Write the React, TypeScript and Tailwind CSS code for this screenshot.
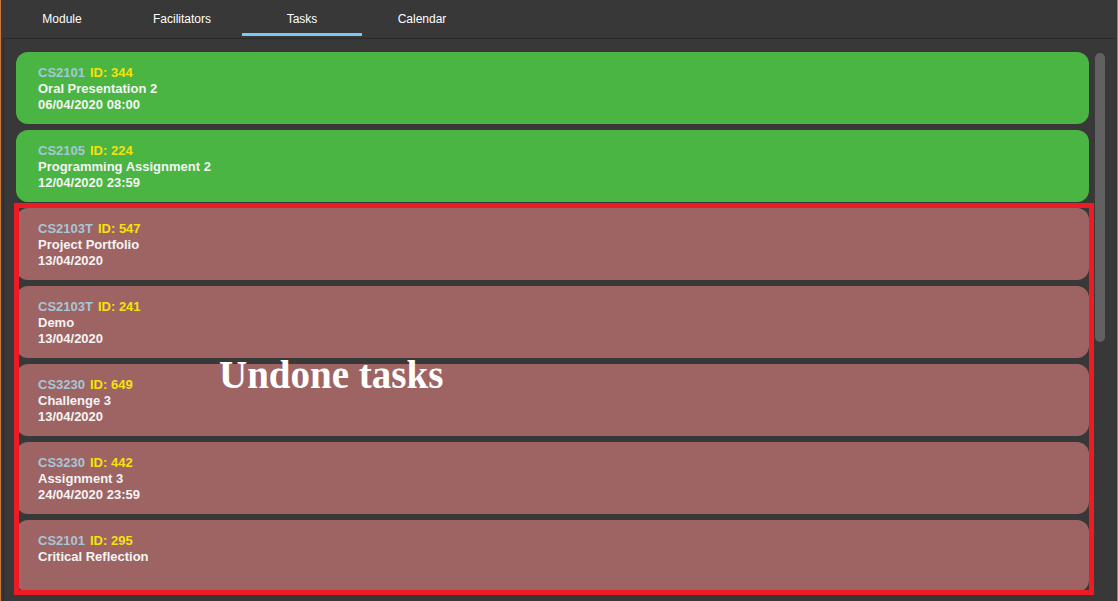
import React from "react";

type Task = { code: string; id: number; title: string; date?: string; done: boolean };

const tasks: Task[] = [
  { code: "CS2101", id: 344, title: "Oral Presentation 2", date: "06/04/2020 08:00", done: true },
  { code: "CS2105", id: 224, title: "Programming Assignment 2", date: "12/04/2020 23:59", done: true },
  { code: "CS2103T", id: 547, title: "Project Portfolio", date: "13/04/2020", done: false },
  { code: "CS2103T", id: 241, title: "Demo", date: "13/04/2020", done: false },
  { code: "CS3230", id: 649, title: "Challenge 3", date: "13/04/2020", done: false },
  { code: "CS3230", id: 442, title: "Assignment 3", date: "24/04/2020 23:59", done: false },
  { code: "CS2101", id: 295, title: "Critical Reflection", done: false },
];

const tabs = ["Module", "Facilitators", "Tasks", "Calendar"];

export default function App() {
  return (
    <div
      className="relative w-[1118px] h-[601px] overflow-hidden bg-[#383838] border-x border-[#c8783a] flex flex-col"
      style={{ fontFamily: '"Liberation Sans", Arial, sans-serif' }}
    >
      <div className="h-[38px] flex pl-[1px] shrink-0">
        {tabs.map((t) => (
          <div
            key={t}
            className="relative w-[120px] h-[38px] flex items-center justify-center text-[12px] text-white"
          >
            {t}
            {t === "Tasks" && (
              <div className="absolute left-0 right-0 bottom-[2px] h-[3px] bg-[#7cc8f2]" />
            )}
          </div>
        ))}
      </div>
      <div className="flex-1 pl-[2px] pr-[1px] flex min-h-0">
        <div className="flex-1 flex border-l border-t border-[#2a2a2a] min-h-0">
          <div className="flex-1 pl-[12px] pt-[13px] flex flex-col gap-[6px]">
            {tasks.map((t, i) => (
              <div
                key={i}
                className={`h-[72px] shrink-0 rounded-[12px] pl-[22px] pt-[13px] text-[13px] leading-[16px] font-bold ${
                  t.done ? "bg-[#4ab543]" : "bg-[#9e6464]"
                }`}
              >
                <div className="flex gap-[5px]">
                  <span className="text-[#a6c7d7]">{t.code}</span>
                  <span className="text-[#f5e20c]">ID: {t.id}</span>
                </div>
                <div className="text-[#f4f4f4]">{t.title}</div>
                {t.date && <div className="text-[#f4f4f4]">{t.date}</div>}
              </div>
            ))}
          </div>
          <div className="w-[10px] ml-[6px] mr-[11px] pt-[14px] shrink-0">
            <div className="h-[289px] rounded-[5px] bg-[#616161]" />
          </div>
        </div>
      </div>

      <div className="absolute left-[13px] top-[203px] w-[1080px] h-[392px] border-[5px] border-[#ed1c24] pointer-events-none" />
      <div
        className="absolute left-[218px] top-[355px] text-[39px] leading-[39px] font-bold text-white whitespace-nowrap"
        style={{ fontFamily: '"Liberation Serif", "Times New Roman", serif' }}
      >
        Undone tasks
      </div>
    </div>
  );
}
